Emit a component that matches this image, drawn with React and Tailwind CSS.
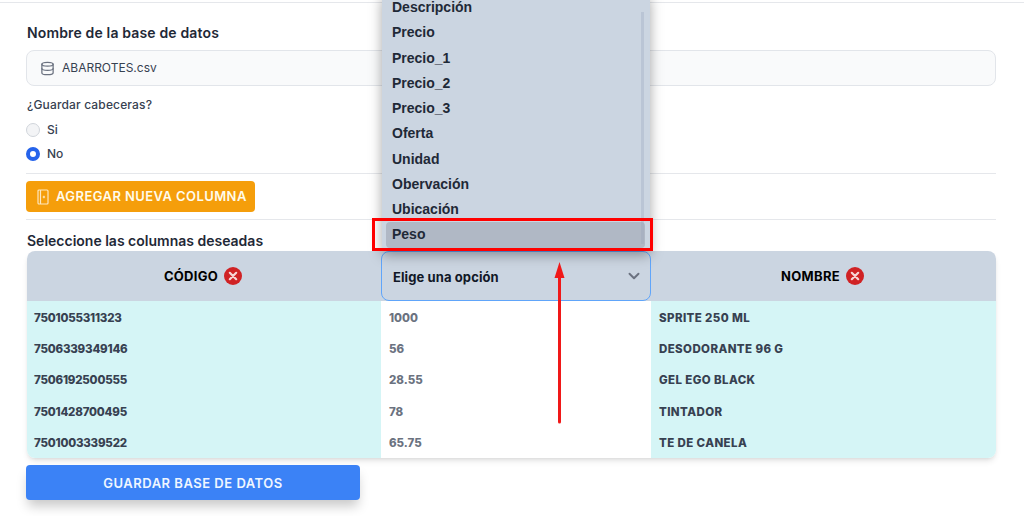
import { ChevronDown, Database } from 'lucide-react'

const OPTIONS = ['Descripción', 'Precio', 'Precio_1', 'Precio_2', 'Precio_3', 'Oferta', 'Unidad', 'Obervación', 'Ubicación', 'Peso']

const ROWS = [
  ['7501055311323', '1000', 'SPRITE 250 ML'],
  ['7506339349146', '56', 'DESODORANTE 96 G'],
  ['7506192500555', '28.55', 'GEL EGO BLACK'],
  ['7501428700495', '78', 'TINTADOR'],
  ['7501003339522', '65.75', 'TE DE CANELA'],
]

function RemoveIcon() {
  return (
    <svg width="18" height="18" viewBox="0 0 18 18">
      <circle cx="9" cy="9" r="9" fill="#d02224" />
      <path d="M5.8 5.8l6.4 6.4M12.2 5.8l-6.4 6.4" stroke="#f6d5d5" strokeWidth="2.2" strokeLinecap="round" />
    </svg>
  )
}

function ColumnIcon() {
  return (
    <svg width="12" height="16" viewBox="0 0 12 16" fill="none" stroke="#fde7c0" strokeWidth="1.2">
      <rect x="1" y="1" width="10" height="14" rx="1" />
      <path d="M3.5 1v14M5.7 8h2.4M6.9 6.8v2.4" />
    </svg>
  )
}

export default function App() {
  return (
    <div className="relative h-[516px] w-[1024px] overflow-hidden bg-white font-['Inter',sans-serif] text-[#1f2937]">
      <div className="h-[3px] border-b border-[#e5e7eb]" />

      <div className="pl-[26px] pr-[28px]">
        <label className="mt-[20px] block pl-px text-[14px] leading-[20px] font-semibold tracking-[0.15px] text-[#1f2937]">Nombre de la base de datos</label>
        <div className="mt-[7px] flex h-[36px] items-center gap-[7px] rounded-lg border border-[#e2e5ea] bg-[#f9fafb] px-[13px]">
          <Database size={15} className="text-[#6b7280]" />
          <span className="text-[12px] text-[#374151]">ABARROTES.csv</span>
        </div>

        <p className="mt-[9px] pl-px text-[12px] leading-[20px] font-medium tracking-[0.15px] text-[#374151]">¿Guardar cabeceras?</p>
        <div className="mt-[3px] flex h-[24px] items-center gap-[7px]">
          <span className="h-[14px] w-[14px] rounded-full border border-[#d1d5db] bg-[#f3f4f6]" />
          <span className="text-[12px] font-medium text-[#374151]">Si</span>
        </div>
        <div className="flex h-[24px] items-center gap-[7px]">
          <span className="h-[14px] w-[14px] rounded-full border-[4px] border-[#2563eb] bg-white" />
          <span className="text-[12px] font-medium text-[#374151]">No</span>
        </div>

        <div className="mt-[7px] border-t border-[#e5e7eb] pt-[7px]">
          <button className="flex h-[31px] w-[229px] items-center gap-[7px] rounded bg-[#f59e0b] pl-[11px] text-[13px] font-semibold tracking-[0.42px] text-[#fffbeb]">
            <ColumnIcon />
            AGREGAR NUEVA COLUMNA
          </button>
        </div>

        <div className="mt-[7px] border-t border-[#e5e7eb] pt-[11px]">
          <h3 className="pl-px text-[14px] leading-[20px] font-semibold text-[#1f2937]">Seleccione las columnas deseadas</h3>
        </div>

        <div className="ml-px rounded-lg shadow-md">
          <div className="grid h-[50px] grid-cols-[354px_270px_345px] rounded-t-lg bg-[#cbd5e1]">
            <div className="flex items-center justify-center gap-[6px] pr-[2px] text-[13px] font-bold tracking-[0.3px] text-black">
              <span className="pt-[2px]">CÓDIGO</span> <RemoveIcon />
            </div>
            <div className="flex items-center justify-between rounded-lg border border-[#60a5fa] bg-[#cbd5e1] pr-[7px] pl-[11px] text-[13px] font-bold tracking-[0.1px] text-[#111827]">
              <span className="pt-[3px]">Elige una opción</span>
              <ChevronDown size={18} strokeWidth={2.6} className="text-[#6b7280]" />
            </div>
            <div className="flex items-center justify-center gap-[6px] pr-[2px] text-[13px] font-bold tracking-[0.3px] text-black">
              <span className="pt-[2px]">NOMBRE</span> <RemoveIcon />
            </div>
          </div>
          {ROWS.map((row, i) => (
            <div key={row[0]} className="grid h-[31.4px] grid-cols-[354px_270px_345px] pt-0 text-[11.5px] font-extrabold">
              <div className={`flex items-center bg-[#d5f5f6] pt-[3px] pl-[7px] tracking-[-0.2px] text-[#374151] ${i === 4 ? 'rounded-bl-lg' : ''}`}>{row[0]}</div>
              <div className="flex items-center bg-white pt-[3px] pl-[8px] text-[#6b7280]">{row[1]}</div>
              <div className={`flex items-center bg-[#d5f5f6] pt-[3px] pl-[8px] tracking-[0.4px] text-[#374151] ${i === 4 ? 'rounded-br-lg' : ''}`}>{row[2]}</div>
            </div>
          ))}
        </div>

        <button className="mt-[7.5px] h-[35px] w-[334px] rounded bg-[#3b82f6] pt-[1px] text-[13px] font-semibold tracking-[0.5px] text-[#eff6ff] shadow-[0_8px_12px_-2px_rgba(0,0,0,0.22)]">
          GUARDAR BASE DE DATOS
        </button>
      </div>

      {/* menu abierto */}
      <div className="absolute top-[-6px] left-[382px] h-[257px] w-[268px] bg-[#cbd5e1] pt-[1px] shadow-[0_4px_12px_rgba(0,0,0,0.35)]">
        <div className="absolute top-[18px] right-[6px] h-[232px] w-[3px] bg-[#94a3b8]/30" />
        {OPTIONS.map((o) => (
          <div key={o} className={`mr-[5px] ml-[4px] flex h-[25.25px] items-center rounded pl-[6px] font-['Liberation_Sans',sans-serif] text-[14px] font-bold text-[#1f2937] ${o === 'Peso' ? 'bg-[#b0b8c5]' : ''}`}>
            {o}
          </div>
        ))}
      </div>

      {/* anotaciones */}
      <div className="absolute top-[218px] left-[372px] h-[33px] w-[281px] border-[3px] border-[#ff0000]" />
      <svg className="absolute top-[258px] left-[550px]" width="20" height="168" viewBox="0 0 20 168">
        <path d="M9.5 20L9.5 164" stroke="#f01818" strokeWidth="3" strokeLinecap="round" />
        <path d="M9.5 4L4.5 20H14.5Z" fill="#f01818" />
      </svg>
    </div>
  )
}
